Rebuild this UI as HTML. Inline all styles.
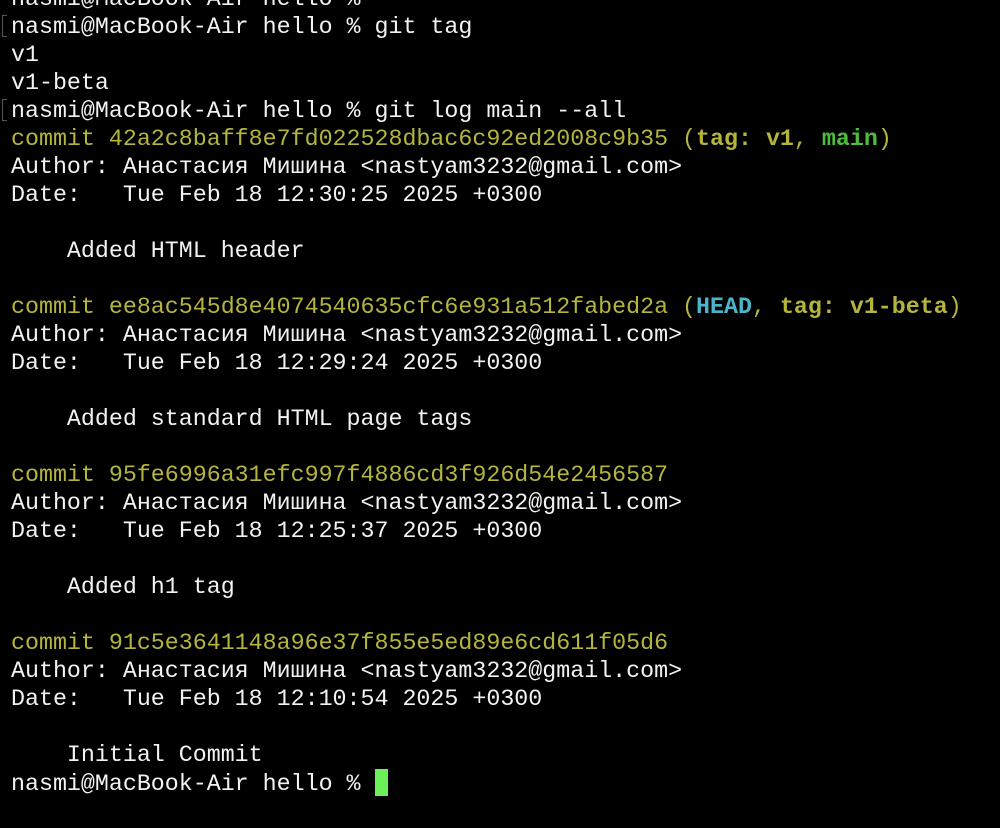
<!DOCTYPE html>
<html><head><meta charset="utf-8"><style>
html,body{margin:0;padding:0;background:#000;width:1000px;height:828px;overflow:hidden}
pre{margin:0;position:absolute;left:11px;top:-15px;font-family:"Liberation Mono","DejaVu Sans Mono",monospace;font-size:23.3px;line-height:28px;color:#f2f2f2;white-space:pre}
.y{color:#b5b53e}.b{font-weight:bold}.g{color:#4cbf3c}.c{color:#4cb5c9}
.br{position:absolute;left:2px;width:4px;height:20px;border:1px solid #555;border-right:none}
.cur{display:inline-block;width:13px;height:27px;background:#6cf05a;vertical-align:-6px}
</style></head><body>
<div class="br" style="top:15px"></div>
<div class="br" style="top:99px"></div>
<pre>nasmi@MacBook-Air hello %
nasmi@MacBook-Air hello % git tag
v1
v1-beta
nasmi@MacBook-Air hello % git log main --all
<span class="y">commit 42a2c8baff8e7fd022528dbac6c92ed2008c9b35 (<span class="b">tag: v1</span>, <span class="g b">main</span>)</span>
Author: Анастасия Мишина &lt;nastyam3232@gmail.com&gt;
Date:   Tue Feb 18 12:30:25 2025 +0300

    Added HTML header

<span class="y">commit ee8ac545d8e4074540635cfc6e931a512fabed2a (<span class="c b">HEAD</span>, <span class="b">tag: v1-beta</span>)</span>
Author: Анастасия Мишина &lt;nastyam3232@gmail.com&gt;
Date:   Tue Feb 18 12:29:24 2025 +0300

    Added standard HTML page tags

<span class="y">commit 95fe6996a31efc997f4886cd3f926d54e2456587</span>
Author: Анастасия Мишина &lt;nastyam3232@gmail.com&gt;
Date:   Tue Feb 18 12:25:37 2025 +0300

    Added h1 tag

<span class="y">commit 91c5e3641148a96e37f855e5ed89e6cd611f05d6</span>
Author: Анастасия Мишина &lt;nastyam3232@gmail.com&gt;
Date:   Tue Feb 18 12:10:54 2025 +0300

    Initial Commit
nasmi@MacBook-Air hello % <span class="cur"></span></pre>
</body></html>
